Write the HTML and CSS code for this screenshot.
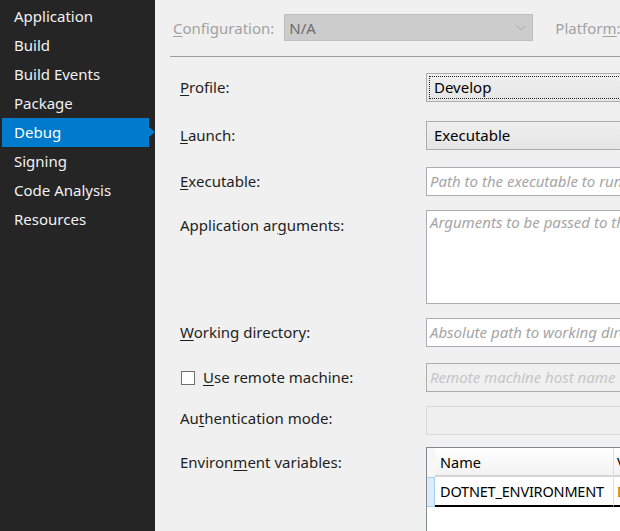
FILE: index.html
```html
<!DOCTYPE html>
<html>
<head>
<meta charset="utf-8">
<link rel="stylesheet" href="styles.css">
</head>
<body>
<div class="app">
  <nav class="side">
    <div class="nav-item">Application</div>
    <div class="nav-item">Build</div>
    <div class="nav-item">Build Events</div>
    <div class="nav-item">Package</div>
    <div class="nav-item active">Debug</div>
    <div class="nav-item">Signing</div>
    <div class="nav-item">Code Analysis</div>
    <div class="nav-item">Resources</div>
  </nav>
  <main class="main">
    <div class="topbar">
      <span class="top-label"><u>C</u>onfiguration:</span>
      <div class="combo-disabled">
        <span>N/A</span>
        <svg class="chev" width="10" height="6" viewBox="0 0 10 6"><path d="M0.5 0.5 L5 5 L9.5 0.5" fill="none" stroke="#a8a8a8" stroke-width="1"/></svg>
      </div>
      <span class="top-label plat">Platfor<u>m</u>:</span>
    </div>
    <div class="sep"></div>
    <div class="form">
      <div class="row r-profile">
        <label class="lbl"><u>P</u>rofile:</label>
        <div class="combo focus"><span class="focus-ring">Develop</span></div>
      </div>
      <div class="row r-launch">
        <label class="lbl"><u>L</u>aunch:</label>
        <div class="combo"><span class="val">Executable</span></div>
      </div>
      <div class="row r-exe">
        <label class="lbl"><u>E</u>xecutable:</label>
        <div class="tbox"><span class="ph">Path to the executable to run</span></div>
      </div>
      <div class="row r-args">
        <label class="lbl">Application ar<u>g</u>uments:</label>
        <div class="tbox tall"><span class="ph">Arguments to be passed to the executable</span></div>
      </div>
      <div class="row r-wd">
        <label class="lbl"><u>W</u>orking directory:</label>
        <div class="tbox"><span class="ph">Absolute path to working directory</span></div>
      </div>
      <div class="row r-remote">
        <label class="lbl chk-lbl"><span class="chk"></span><span><u>U</u>se remote machine:</span></label>
        <div class="tbox disabled"><span class="ph dim">Remote machine host name</span></div>
      </div>
      <div class="row r-auth">
        <label class="lbl">Au<u>t</u>hentication mode:</label>
        <div class="tbox disabled2"></div>
      </div>
      <div class="row r-env">
        <label class="lbl">Environ<u>m</u>ent variables:</label>
        <div class="grid">
          <div class="g-head">
            <div class="g-corner"></div>
            <div class="g-hcell name">Name</div>
            <div class="g-hcell value">Value</div>
          </div>
          <div class="g-row">
            <div class="g-rh"></div>
            <div class="g-cell name">DOTNET_ENVIRONMENT</div>
            <div class="g-cell value orange">Development</div>
          </div>
        </div>
      </div>
    </div>
  </main>
</div>
</body>
</html>
```
FILE: styles.css
```css
* { box-sizing: border-box; }
html, body { margin: 0; padding: 0; }
body {
  width: 620px;
  height: 531px;
  overflow: hidden;
  font-family: "Noto Sans", "Open Sans", sans-serif;
  font-size: 15px;
  background: #f0f0f0;
}
u { text-decoration: underline; text-underline-offset: 2px; text-decoration-thickness: 1px; }
.app { display: flex; height: 531px; }

.side {
  width: 155px;
  flex: none;
  background: #252526;
  padding-top: 2px;
}
.nav-item {
  height: 29px;
  line-height: 28px;
  padding-left: 12px;
  margin-left: 2px;
  width: 147px;
  color: #f1f1f1;
  position: relative;
  white-space: nowrap;
}
.nav-item.active { background: #007acc; color: #ffffff; }
.nav-item.active::after {
  content: "";
  position: absolute;
  right: -6px;
  top: 9px;
  border-left: 6px solid #007acc;
  border-top: 5px solid transparent;
  border-bottom: 5px solid transparent;
}

.main { flex: 1; overflow: hidden; min-width: 0; }

.topbar {
  display: flex;
  align-items: center;
  height: 27px;
  margin-top: 14px;
  padding-left: 18px;
  white-space: nowrap;
}
.top-label { color: #a2a2a2; }
.combo-disabled {
  margin-left: 10px;
  width: 249px;
  height: 27px;
  flex: none;
  background: #cccccc;
  border: 1px solid #bfbfbf;
  display: flex;
  align-items: center;
  justify-content: space-between;
  padding: 0 6px 0 4px;
  color: #6d6d6d;
}
.chev { margin-top: 1px; }
.plat { margin-left: 22px; }
.sep {
  margin: 15px 0 0 15px;
  height: 1px;
  background: #a0a0a0;
}

.form { padding-left: 25px; margin-top: 16px; }
.row { display: flex; align-items: flex-start; }
.lbl {
  width: 246px;
  flex: none;
  line-height: 28px;
  color: #1e1e1e;
  white-space: nowrap;
}
.r-profile { height: 48px; }
.r-launch { height: 46px; }
.r-exe { height: 43px; }
.r-args { height: 108px; }
.r-args .lbl { line-height: 30px; }
.r-wd { height: 45px; }
.r-remote { height: 43px; }
.r-auth { height: 41px; }
.r-auth .lbl { line-height: 25px; }
.r-env .lbl { line-height: 30px; }

.combo {
  width: 230px;
  flex: none;
  height: 29px;
  border: 1px solid #acacac;
  background: linear-gradient(#efefef, #e5e5e5);
  padding: 2px;
  color: #000;
  white-space: nowrap;
}
.combo .val { display: block; padding-left: 5px; line-height: 23px; }
.focus-ring {
  display: block;
  height: 23px;
  line-height: 21px;
  padding-left: 4px;
  border: 1px dotted #222;
  border-right: none;
}

.tbox {
  width: 230px;
  flex: none;
  height: 29px;
  border: 1px solid #abadb3;
  background: #ffffff;
  padding-left: 3px;
  white-space: nowrap;
  overflow: hidden;
}
.tbox.tall { height: 94px; }
.tbox.tall .ph { line-height: 22px; }
.ph {
  font-style: italic;
  color: #a5a5a5;
  line-height: 26px;
}
.ph.dim { color: #c6c6c6; }
.tbox.disabled { background: #f0f0f0; border-color: #adadad; }
.tbox.disabled2 { background: #f0f0f0; border-color: #d9d9d9; }

.chk-lbl { display: flex; align-items: center; }
.chk {
  width: 14px;
  height: 14px;
  border: 1px solid #707070;
  background: #fff;
  margin-left: 1px;
  margin-right: 8px;
  margin-top: 1px;
}

.grid {
  width: 240px;
  flex: none;
  height: 90px;
  border: 1px solid #828790;
  border-right: none;
  border-bottom: none;
  background: #ffffff;
  white-space: nowrap;
  font-size: 14.5px;
}
.g-head { display: flex; height: 29px; }
.g-corner { width: 8px; flex: none; background: #f7f7f7; }
.g-hcell {
  height: 29px;
  line-height: 28px;
  padding-left: 5px;
  background: linear-gradient(#ffffff, #f2f2f2);
  border-bottom: 2px solid #d5d5d5;
  border-right: 1px solid #e0e0e0;
  color: #000;
  flex: none;
}
.g-hcell.name { width: 179px; }
.g-hcell.value { width: 80px; padding-left: 3px; }
.g-row { display: flex; height: 30px; }
.g-rh {
  width: 8px;
  flex: none;
  background: #dcecfc;
  border: 1px solid #a6d2f0;
  border-left: none;
}
.g-cell {
  height: 30px;
  line-height: 29px;
  padding-left: 5px;
  border-bottom: 2px solid #000;
  background: #fff;
  color: #000;
  flex: none;
  overflow: hidden;
  letter-spacing: -0.2px;
}
.g-cell.name { width: 179px; border-right: 1px solid #e0e0e0; }
.g-cell.value { width: 80px; padding-left: 3px; }
.orange { color: #b56a00; }
```
